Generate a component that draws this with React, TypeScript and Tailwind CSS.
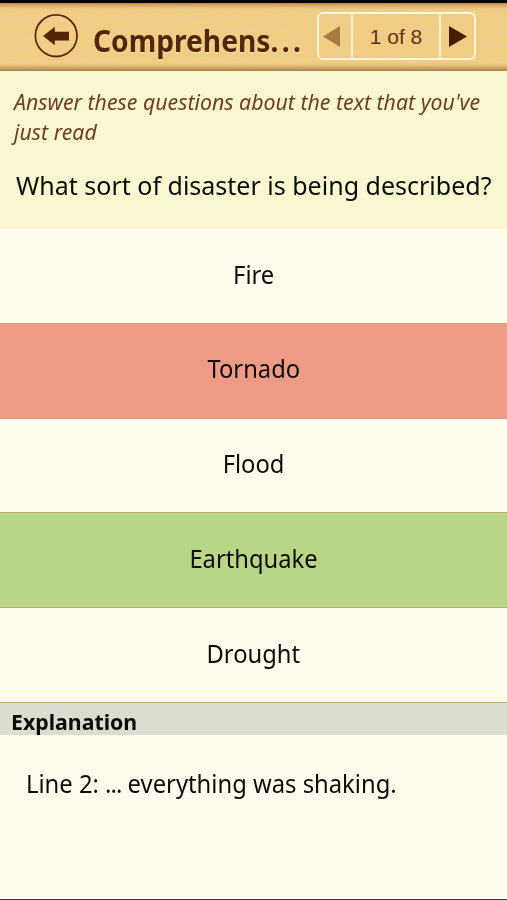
import clsx from "clsx";

interface Answer {
  label: string;
  state?: "wrong" | "correct";
}

const answers: Answer[] = [
  { label: "Fire" },
  { label: "Tornado", state: "wrong" },
  { label: "Flood" },
  { label: "Earthquake", state: "correct" },
  { label: "Drought" },
];

function WoodGrain() {
  return (
    <svg className="absolute inset-0 h-full w-full" preserveAspectRatio="none" aria-hidden="true">
      <filter id="grain" x="0" y="0" width="100%" height="100%">
        <feTurbulence type="fractalNoise" baseFrequency="0.01 0.16" numOctaves="3" seed="8" />
        <feColorMatrix values="0 0 0 0 0.88  0 0 0 0 0.6  0 0 0 0 0.28  0 0 0 2.4 -0.9" />
      </filter>
      <rect width="100%" height="100%" filter="url(#grain)" opacity="0.5" />
    </svg>
  );
}

function Header() {
  return (
    <header className="relative h-[71px] shrink-0 overflow-hidden border-t-[3px] border-black bg-[#f1cd84]">
      <WoodGrain />
      <div className="absolute -inset-x-1 inset-y-0 shadow-[inset_0_4px_5px_-2px_#a87b3d,inset_0_-5px_5px_-2px_#a87b3d]" />
      <div className="relative flex h-full items-start">
        <button className="mt-[11px] ml-[34px] h-11 w-11 shrink-0" aria-label="Back">
          <svg viewBox="0 0 44 44" className="h-11 w-11">
            <circle cx="22.2" cy="21.7" r="20.8" fill="none" stroke="#5c2b0a" strokeWidth="1.8" />
            <path d="M9 22 20.8 12.8V17.7H35V26.5H20.8V31.2Z" fill="#542506" />
          </svg>
        </button>
        <h1 className="mt-[16px] ml-[15px] origin-left scale-x-[0.955] text-[29.5px] leading-[44px] font-bold whitespace-nowrap text-[#542606] [text-shadow:0_1px_1px_#fbe5b3]">
          Comprehens<span className="tracking-[3.5px]">...</span>
        </h1>
        <div className="absolute top-[9px] left-[317px] flex h-[48px] w-[159px] rounded-md border-2 border-[#fff5d9]">
          <button className="flex w-[32px] items-center pl-[4px]" aria-label="Previous">
            <svg viewBox="0 0 17 21" className="h-[21px] w-[17px]">
              <path d="M0 10.5 17 0V21Z" fill="#a57b43" />
            </svg>
          </button>
          <div className="w-[90px] border-x-2 border-[#fff5d9] text-center font-['Liberation_Sans',sans-serif] text-[21px] leading-[46px] text-[#633411]">
            1 of 8
          </div>
          <button className="flex flex-1 items-center justify-center" aria-label="Next">
            <svg viewBox="0 0 18 21" className="h-[21px] w-[18px]">
              <path d="M18 10.5 0 0V21Z" fill="#471c03" />
            </svg>
          </button>
        </div>
      </div>
    </header>
  );
}

function AnswerRow({ label, state }: Answer) {
  return (
    <li
      className={clsx(
        "flex h-[94.8px] items-center justify-center border-b border-[#c4a57c] pb-[3px] text-[25px]",
        state === "wrong" && "bg-[#ee9b85]",
        state === "correct" && "bg-[#b9d586]"
      )}
    >
      <span className="scale-x-95">{label}</span>
    </li>
  );
}

export default function App() {
  return (
    <main className="flex h-[900px] w-[507px] flex-col overflow-hidden border-b border-[#44443e] bg-[#fffced] font-['Noto_Sans',sans-serif] text-[#0d0c08]">
      <Header />
      <section className="h-[158px] shrink-0 bg-[#f9f7d0] pt-[15px]">
        <p className="ml-[14px] w-fit origin-left scale-x-[0.968] text-[22px] leading-[30px] whitespace-nowrap text-[#713d22] italic">
          Answer these questions about the text that you've
          <br />
          just read
        </p>
        <h2 className="mt-[21px] ml-[16px] w-fit origin-left scale-x-[0.962] text-[26px] leading-[36px] whitespace-nowrap">
          What sort of disaster is being described?
        </h2>
      </section>
      <ul className="shrink-0">
        {answers.map((answer) => (
          <AnswerRow key={answer.label} {...answer} />
        ))}
      </ul>
      <h3 className="h-[32px] shrink-0 bg-[#dddcd0] pl-[11px] text-[22px] leading-[37px] font-bold">
        <span className="inline-block origin-left scale-x-[0.968]">Explanation</span>
      </h3>
      <p className="mt-[30px] ml-[26px] w-fit origin-left scale-x-[0.952] text-[25px] leading-[36px] whitespace-nowrap">
        Line 2: <span className="tracking-[-1px]">...</span> everything was shaking.
      </p>
    </main>
  );
}
